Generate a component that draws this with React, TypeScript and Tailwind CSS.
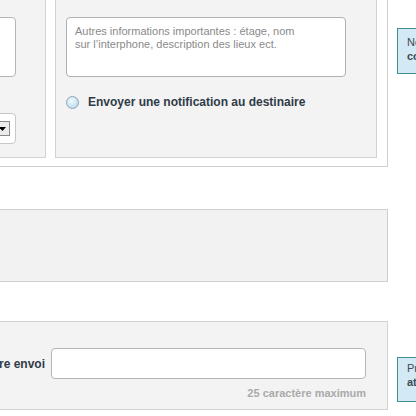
import React from 'react'

function Hint({ first, second, className }: { first: string; second: string; className: string }) {
  return (
    <div
      className={`w-[220px] shrink-0 border border-[#3f8f8f] bg-[#d3e9f6] pl-[9px] text-[11px] leading-[14px] text-[#3a4a55] ${className}`}
    >
      <div>{first}</div>
      <div className="font-bold">{second}</div>
    </div>
  )
}

export default function App() {
  return (
    <div className="h-[416px] w-[416px] overflow-hidden bg-white font-['Liberation_Sans',Arial,sans-serif]">
      <div className="-mt-[20px] -ml-[200px] flex flex-col">
        {/* Bloc adresse / infos */}
        <div className="flex items-start gap-[9px]">
          <div className="flex h-[187px] w-[588px] shrink-0 gap-[9px] border border-[#cfcfcf] bg-white pt-[10px] pr-[10px] pb-[8px] pl-[10px]">
            <div className="flex h-[167px] w-[235px] flex-col items-end border border-[#d2d2d2] bg-[#f3f3f3] pt-[25px] pr-[29px]">
              <textarea className="h-[60px] w-[180px] resize-none rounded-[4px] border border-[#b5b5b5] bg-white" />
              <div className="mt-[36px] flex h-[31px] w-[150px] items-center justify-end rounded-[4px] border border-[#c8c8c8] bg-white pr-[5px]">
                <div className="flex h-[15px] w-[16px] items-center justify-center border border-[#8a8a8a] bg-[#ececec]">
                  <svg width="7" height="4" viewBox="0 0 7 4">
                    <path d="M0 0h7L3.5 4z" fill="#000" />
                  </svg>
                </div>
              </div>
            </div>
            <div className="flex h-[167px] w-[322px] flex-col border border-[#d2d2d2] bg-[#f3f3f3] pt-[25px] pl-[10px]">
              <textarea
                className="h-[60px] w-[280px] resize-none rounded-[4px] border border-[#b0b0b0] bg-white px-[8px] pt-[7px] text-[11px] leading-[13px] text-[#888] placeholder:text-[#8a8a8a]"
                placeholder={"Autres informations importantes : étage, nom\nsur l’interphone, description des lieux ect."}
              />
              <label className="mt-[18px] flex h-[14px] items-center gap-[9px]">
                <span className="h-[13px] w-[13px] rounded-full border border-[#8fa4b4] bg-[radial-gradient(circle_at_40%_35%,#f4fbff,#a8d2ea)]" />
                <span className="text-[12px] font-bold text-[#2f3b47]">Envoyer une notification au destinaire</span>
              </label>
            </div>
          </div>
          <Hint first="Nom inscrit sur la boîte" second="complet du destinataire" className="mt-[48px] h-[46px] pt-[6px]" />
        </div>

        {/* Bloc intermédiaire */}
        <div className="mt-[42px] h-[73px] w-[588px] border border-[#cfcfcf] bg-[#f2f2f2]" />

        {/* Bloc référence */}
        <div className="mt-[39px] flex items-start gap-[9px]">
          <div className="flex h-[89px] w-[588px] shrink-0 border border-[#d2d2d2] bg-[#f3f3f3] pt-[26px] pr-[21px]">
            <div className="flex h-[31px] w-[244px] items-center justify-end text-[12px] font-bold text-[#2f3b47]">
              Référence de votre envoi
            </div>
            <div className="ml-[6px] flex flex-col">
              <input className="h-[31px] w-[315px] rounded-[4px] border border-[#b5b5b5] bg-white" />
              <div className="mt-[7px] text-right text-[11px] leading-[14px] font-bold text-[#aaaaaa]">
                25 caractère maximum
              </div>
            </div>
          </div>
          <Hint first="Précisez une référence" second="attribuée à cet envoi" className="mt-[36px] h-[45px] pt-[3px]" />
        </div>
      </div>
    </div>
  )
}
